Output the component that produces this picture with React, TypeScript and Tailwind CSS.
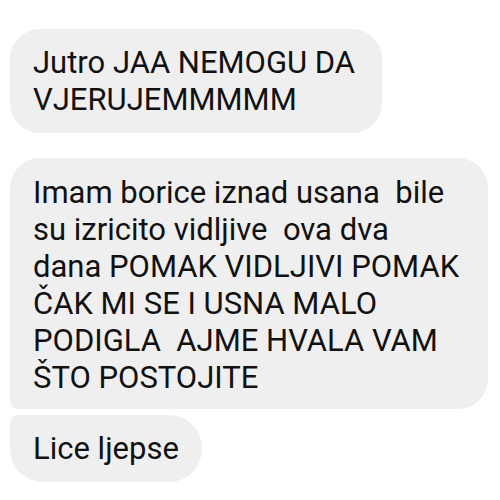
export default function App() {
	return (
		<div
			className="flex h-[500px] w-[500px] flex-col items-start bg-white pl-[10px] pt-[29px] text-[#111] text-[31px] leading-[37px]"
			style={{ fontFamily: "Roboto, 'Noto Sans', sans-serif" }}
		>
			<div className="h-[104px] w-[372px] rounded-[30px] bg-[#efefef] px-[23px] pt-[15px] whitespace-pre">
				{"Jutro JAA NEMOGU DA\nVJERUJEMMMMM"}
			</div>

			<div className="mt-[25px] h-[251px] w-[478px] rounded-[30px] rounded-bl-[8px] bg-[#efefef] px-[23px] pt-[16px] whitespace-pre">
				{"Imam borice iznad usana  bile\nsu izricito vidljive  ova dva\ndana POMAK VIDLJIVI POMAK\nČAK MI SE I USNA MALO\nPODIGLA  AJME HVALA VAM\nŠTO POSTOJITE"}
			</div>

			<div className="mt-[6px] h-[67px] w-[192px] rounded-[33px] rounded-tl-[8px] bg-[#efefef] px-[23px] pt-[15px] whitespace-pre">
				Lice ljepse
			</div>
		</div>
	);
}
